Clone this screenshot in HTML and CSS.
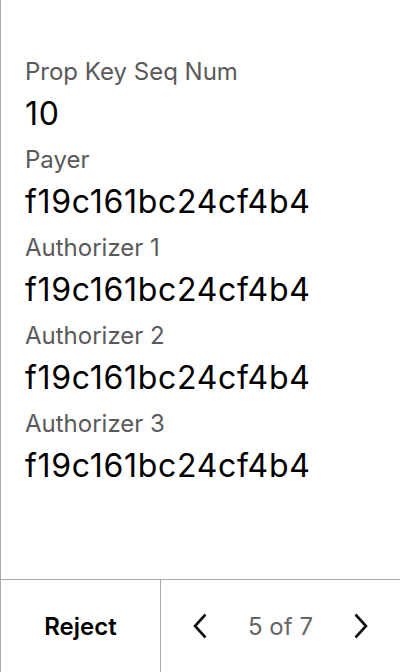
FILE: index.html
```html
<!DOCTYPE html>
<html>
<head>
<meta charset="utf-8">
<link rel="stylesheet" href="styles.css">
</head>
<body>
<div class="screen">
  <div class="content">
    <div class="field">
      <div class="label">Prop Key Seq Num</div>
      <div class="value">10</div>
    </div>
    <div class="field">
      <div class="label">Payer</div>
      <div class="value">f19c161bc24cf4b4</div>
    </div>
    <div class="field">
      <div class="label">Authorizer 1</div>
      <div class="value">f19c161bc24cf4b4</div>
    </div>
    <div class="field">
      <div class="label">Authorizer 2</div>
      <div class="value">f19c161bc24cf4b4</div>
    </div>
    <div class="field">
      <div class="label">Authorizer 3</div>
      <div class="value">f19c161bc24cf4b4</div>
    </div>
  </div>
  <div class="footer">
    <div class="reject">Reject</div>
    <div class="pager">
      <svg class="chev" width="14" height="26" viewBox="0 0 14 26"><path d="M12.5 1.5 L2 13 L12.5 24.5" fill="none" stroke="#111" stroke-width="2.6" stroke-linejoin="miter"/></svg>
      <span class="count">5 of 7</span>
      <svg class="chev" width="14" height="26" viewBox="0 0 14 26"><path d="M1.5 1.5 L12 13 L1.5 24.5" fill="none" stroke="#111" stroke-width="2.6" stroke-linejoin="miter"/></svg>
    </div>
  </div>
</div>
</body>
</html>
```
FILE: styles.css
```css
html, body {
  margin: 0;
  padding: 0;
  background: #fff;
}
body {
  font-family: Inter, "Noto Sans", sans-serif;
}
.screen {
  width: 400px;
  height: 672px;
  box-sizing: border-box;
  border-left: 1px solid #aaa;
  display: flex;
  flex-direction: column;
}
.content {
  flex: 1;
  padding: 56px 0 0 24px;
  display: flex;
  flex-direction: column;
  gap: 4px;
}
.field {
  display: flex;
  flex-direction: column;
}
.label {
  font-size: 24px;
  line-height: 32px;
  color: #5a5a5a;
}
.value {
  font-size: 32px;
  line-height: 52px;
  letter-spacing: 0.7px;
  color: #000;
}
.footer {
  height: 92px;
  border-top: 1px solid #aaa;
  display: flex;
}
.reject {
  width: 159px;
  border-right: 1px solid #aaa;
  display: flex;
  align-items: center;
  justify-content: center;
  font-size: 24px;
  font-weight: 600;
  color: #000;
}
.pager {
  flex: 1;
  display: flex;
  align-items: center;
  justify-content: space-between;
  padding: 0 32px;
}
.count {
  font-size: 24px;
  color: #666;
}
.chev {
  display: block;
}
```
